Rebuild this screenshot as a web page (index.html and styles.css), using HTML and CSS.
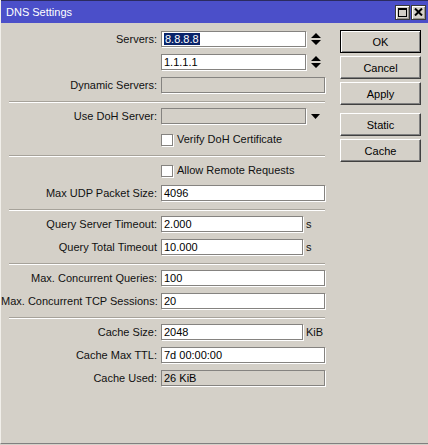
FILE: index.html
```html
<!DOCTYPE html>
<html lang="en">
<head>
    <meta charset="UTF-8">
    <title>DNS Settings</title>
    <link rel="stylesheet" href="styles.css">
</head>
<body>
    <div class="window">
        <!-- title bar -->
        <div class="titlebar">
            <span class="title">DNS Settings</span>
            <div class="title-buttons">
                <span class="tbtn">
                    <svg width="9" height="9" viewBox="0 0 9 9"><rect x="0.5" y="0.5" width="8" height="8" fill="none" stroke="#000"/><rect x="0" y="0" width="9" height="2" fill="#000"/></svg>
                </span>
                <span class="tbtn">
                    <svg width="9" height="8" viewBox="0 0 9 8"><path d="M1 0.5 L8 7.5 M8 0.5 L1 7.5" stroke="#000" stroke-width="2"/></svg>
                </span>
            </div>
        </div>

        <div class="main">
            <div class="form">
                <div class="row">
                    <span class="label">Servers:</span>
                    <div class="field short"><span class="sel">8.8.8.8</span></div>
                    <span class="spin"><svg width="10" height="14" viewBox="0 0 10 14"><path d="M0 6 L5 1 L10 6 Z M0 8 L10 8 L5 13 Z" fill="#000"/></svg></span>
                </div>
                <div class="row">
                    <span class="label"></span>
                    <div class="field short">1.1.1.1</div>
                    <span class="spin"><svg width="10" height="14" viewBox="0 0 10 14"><path d="M0 6 L5 1 L10 6 Z M0 8 L10 8 L5 13 Z" fill="#000"/></svg></span>
                </div>
                <div class="row">
                    <span class="label">Dynamic Servers:</span>
                    <div class="field disabled"></div>
                </div>

                <div class="sep"></div>

                <div class="row">
                    <span class="label">Use DoH Server:</span>
                    <div class="field short disabled"></div>
                    <span class="spin"><svg width="9" height="5" viewBox="0 0 9 5"><path d="M0 0 L9 0 L4.5 5 Z" fill="#000"/></svg></span>
                </div>
                <div class="row">
                    <span class="label"></span>
                    <span class="check"></span>
                    <span class="check-text">Verify DoH Certificate</span>
                </div>

                <div class="sep"></div>

                <div class="row">
                    <span class="label"></span>
                    <span class="check"></span>
                    <span class="check-text">Allow Remote Requests</span>
                </div>
                <div class="row">
                    <span class="label">Max UDP Packet Size:</span>
                    <div class="field">4096</div>
                </div>

                <div class="sep"></div>

                <div class="row">
                    <span class="label">Query Server Timeout:</span>
                    <div class="field unit">2.000</div>
                    <span class="suffix">s</span>
                </div>
                <div class="row">
                    <span class="label">Query Total Timeout</span>
                    <div class="field unit">10.000</div>
                    <span class="suffix">s</span>
                </div>

                <div class="sep"></div>

                <div class="row">
                    <span class="label">Max. Concurrent Queries:</span>
                    <div class="field">100</div>
                </div>
                <div class="row">
                    <span class="label">Max. Concurrent TCP Sessions:</span>
                    <div class="field">20</div>
                </div>

                <div class="sep"></div>

                <div class="row">
                    <span class="label">Cache Size:</span>
                    <div class="field unit">2048</div>
                    <span class="suffix">KiB</span>
                </div>
                <div class="row">
                    <span class="label">Cache Max TTL:</span>
                    <div class="field">7d 00:00:00</div>
                </div>
                <div class="row">
                    <span class="label">Cache Used:</span>
                    <div class="field disabled">26 KiB</div>
                </div>
            </div>

            <!-- dialog buttons -->
            <div class="buttons">
                <button class="btn default">OK</button>
                <button class="btn">Cancel</button>
                <button class="btn">Apply</button>
                <button class="btn spaced">Static</button>
                <button class="btn">Cache</button>
            </div>
        </div>
    </div>
</body>
</html>
```

FILE: styles.css
```css
* {
    box-sizing: border-box;
}

body {
    margin: 0;
    font-family: "Liberation Sans", Arial, sans-serif;
    font-size: 11px;
    color: #111;
    background: #d4d0c8;
}

.window {
    width: 428px;
    height: 444px;
    display: flex;
    flex-direction: column;
    background: #d4d0c8;
    border-left: 1px solid #f1efea;
    border-bottom: 1px solid #808080;
}

.titlebar {
    height: 23px;
    flex-shrink: 0;
    display: flex;
    align-items: center;
    justify-content: space-between;
    padding: 0 2px 0 5px;
    background: #4b4fc9;
    border-top: 1px solid #2b2b60;
    color: #fff;
}

.title-buttons {
    display: flex;
    gap: 1px;
}

.tbtn {
    width: 15px;
    height: 15px;
    display: flex;
    align-items: center;
    justify-content: center;
    background: #d4d0c8;
    border: 1px solid #3a3a3a;
    box-shadow: inset 1px 1px 0 #fff, inset -1px -1px 0 #9a968e;
}

.main {
    flex: 1;
    display: flex;
}

.form {
    width: 324px;
    padding-top: 8px;
    display: flex;
    flex-direction: column;
}

.row {
    height: 16px;
    margin-bottom: 7px;
    display: flex;
    align-items: center;
}

.label {
    width: 156px;
    margin-right: 4px;
    text-align: right;
    white-space: nowrap;
}

.field {
    width: 164px;
    height: 16px;
    padding-left: 2px;
    line-height: 14px;
    background: #fff;
    color: #000;
    border: 1px solid #858380;
    box-shadow: 1px 1px 0 #fff;
    white-space: nowrap;
}

.field.short {
    width: 145px;
}

.field.unit {
    width: 142px;
}

.field.disabled {
    background: #d4d0c8;
}

.sel {
    background: #0a246a;
    color: #fff;
    padding: 0 1px;
}

.spin {
    width: 19px;
    display: flex;
    justify-content: center;
}

.suffix {
    margin-left: 3px;
}

.check {
    width: 12px;
    height: 12px;
    margin-top: 2px;
    background: #fff;
    border: 1px solid #858380;
    box-shadow: 1px 1px 0 #fff;
}

.check-text {
    margin-left: 4px;
}

.sep {
    margin: 1px 0 5px 8px;
    border-top: 1px solid #a6a29a;
    border-bottom: 1px solid #fff;
}

.buttons {
    width: 81px;
    margin-left: 15px;
    padding-top: 7px;
    display: flex;
    flex-direction: column;
    gap: 3px;
}

.btn {
    height: 23px;
    padding: 0;
    font-family: inherit;
    font-size: 11px;
    color: #000;
    background: #d4d0c8;
    border: 1px solid;
    border-color: #fff #404040 #404040 #fff;
    box-shadow: inset -1px -1px 0 #808080;
}

.btn.default {
    border: 1px solid #000;
    box-shadow: inset 1px 1px 0 #fff, inset -1px -1px 0 #808080;
}

.btn.spaced {
    margin-top: 5px;
}
```
